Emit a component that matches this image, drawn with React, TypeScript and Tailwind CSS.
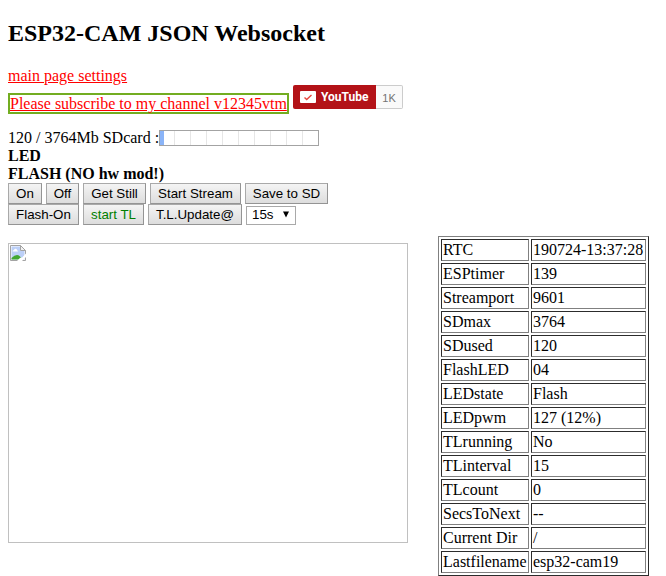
import type { ReactNode } from "react";

const rows: [string, string][] = [
  ["RTC", "190724-13:37:28"],
  ["ESPtimer", "139"],
  ["Streamport", "9601"],
  ["SDmax", "3764"],
  ["SDused", "120"],
  ["FlashLED", "04"],
  ["LEDstate", "Flash"],
  ["LEDpwm", "127 (12%)"],
  ["TLrunning", "No"],
  ["TLinterval", "15"],
  ["TLcount", "0"],
  ["SecsToNext", "--"],
  ["Current Dir", "/"],
  ["Lastfilename", "esp32-cam19"],
];

const ticks = [0, 1, 2, 3, 4, 5, 6, 7, 8];

function Button({ className, children }: { className: string; children: ReactNode }) {
  return (
    <button
      className={`flex h-[21px] shrink-0 items-center justify-center whitespace-nowrap border border-t-[#a9a9a9] border-l-[#a9a9a9] border-r-[#949494] border-b-[#949494] bg-linear-to-b from-[#f4f4f4] to-[#dddddd] font-['Liberation_Sans',Arial,sans-serif] text-[13.333px] leading-[15px] ${className}`}
    >
      {children}
    </button>
  );
}

function BrokenImageIcon() {
  return (
    <svg width="16" height="16" viewBox="0 0 16 16" className="block">
      <path d="M.5.5h10l5 5v10H.5z" fill="#fff" stroke="#a3a3a3" />
      <path d="M1.500 1.500h9v4.500h4v8.500h-13z" fill="#bcd0f8" />
      <path d="M2.500 6.500q0-1.500 1.500-1.500.6-1.500 1.800-1.200 1.200.2 1.300 1.400 1 .2.900 1.300z" fill="#fff" />
      <path d="M1.500 14.500V13q3-3 5.500-3 3 0 5 4.500z" fill="#43a833" />
      <path d="M10.500.5v5h5z" fill="#f1f1f1" stroke="#a3a3a3" />
      <path d="M7 16l3.200-3.200 2-.4L16 8.500v3.500l-2.500 2.500L12 16z" fill="#fff" />
    </svg>
  );
}

export default function App() {
  return (
    <div className="h-[576px] w-[666px] overflow-hidden bg-white px-2 pt-5 font-['Liberation_Serif','Times_New_Roman',serif] text-base leading-[18px] text-black">
      <h2 className="h-[27px] text-2xl leading-[27px] font-bold">ESP32-CAM JSON Websocket</h2>
      <div className="mt-5 h-[18px]">
        <a className="text-[#ff0000] underline">main page settings</a>
      </div>
      <div className="flex h-[29px] items-start gap-1">
        <a className="mt-2 h-[21px] w-[281px] shrink-0 border-2 border-[#73ad21] leading-[18px] whitespace-nowrap text-[#ff0000] underline">
          Please subscribe to my channel v12345vtm
        </a>
        <div className="flex h-6 w-[110px] font-['Roboto',sans-serif]">
          <div className="flex w-[83px] items-center rounded-l-[2px] bg-[#b31217] pl-[7px]">
            <svg width="16" height="12" viewBox="0 0 16 12">
              <rect width="16" height="12" rx="1" fill="#fff" />
              <path d="M4.500 6.500l2.200 2L11.500 4" fill="none" stroke="#e5473f" strokeWidth="1.400" />
            </svg>
            <span className="ml-[5px] font-['Roboto',sans-serif] text-xs font-bold text-white">YouTube</span>
          </div>
          <div className="flex w-[27px] items-center justify-center rounded-r-[2px] border border-l-0 border-[#ccc] bg-[#fafafa] pt-[2px] font-['Liberation_Sans',Arial,sans-serif] text-[11px] text-[#737373]">
            1K
          </div>
        </div>
      </div>
      <div className="mt-[15px] flex h-[18px]">
        <span className="w-[151px] shrink-0 whitespace-nowrap">120 / 3764Mb SDcard :</span>
        <div className="mt-px flex h-4 w-40 border border-[#a3a3a3]">
          <div className="mr-[10px] w-1 bg-[#8ab4f8]" />
          {ticks.map((t) => (
            <div key={t} className="w-4 border-l border-[#e6e6e6]" />
          ))}
        </div>
      </div>
      <div className="h-[18px] font-bold">LED</div>
      <div className="h-[18px] font-bold">FLASH (NO hw mod!)</div>
      <div className="flex gap-1">
        <Button className="w-[34px]">On</Button>
        <Button className="w-[33px]">Off</Button>
        <Button className="w-[63px]">Get Still</Button>
        <Button className="w-[91px]">Start Stream</Button>
        <Button className="w-[83px]">Save to SD</Button>
      </div>
      <div className="flex items-center gap-1">
        <Button className="w-[71px]">Flash-On</Button>
        <Button className="w-[61px] text-[#008000]">start TL</Button>
        <Button className="w-[94px]">T.L.Update@</Button>
        <div className="mt-px flex h-[19px] w-[50px] items-center justify-between border border-[#a9a9a9] pr-[6px] pl-[5px] font-['Liberation_Sans',Arial,sans-serif] text-[13.333px]">
          <span>15s</span>
          <svg width="6" height="7" viewBox="0 0 6 7" className="mb-px">
            <path d="M0 .5h6L3 6.500z" fill="#000" />
          </svg>
        </div>
      </div>
      <div className="mt-[11px] flex items-start gap-[30px]">
        <div className="mt-[7px] h-[300px] w-[400px] shrink-0 border border-[#c0c0c0] p-px">
          <BrokenImageIcon />
        </div>
        <div className="grid shrink-0 grid-cols-[88px_115px] gap-[2px] border border-t-[#808080] border-r-[#2c2c2c] border-b-[#2c2c2c] border-l-[#808080] p-[2px]">
          {rows.flat().map((text, i) => (
            <div
              key={i}
              className="h-[22px] border border-t-[#2c2c2c] border-r-[#808080] border-b-[#808080] border-l-[#2c2c2c] p-px whitespace-nowrap"
            >
              {text}
            </div>
          ))}
        </div>
      </div>
    </div>
  );
}
